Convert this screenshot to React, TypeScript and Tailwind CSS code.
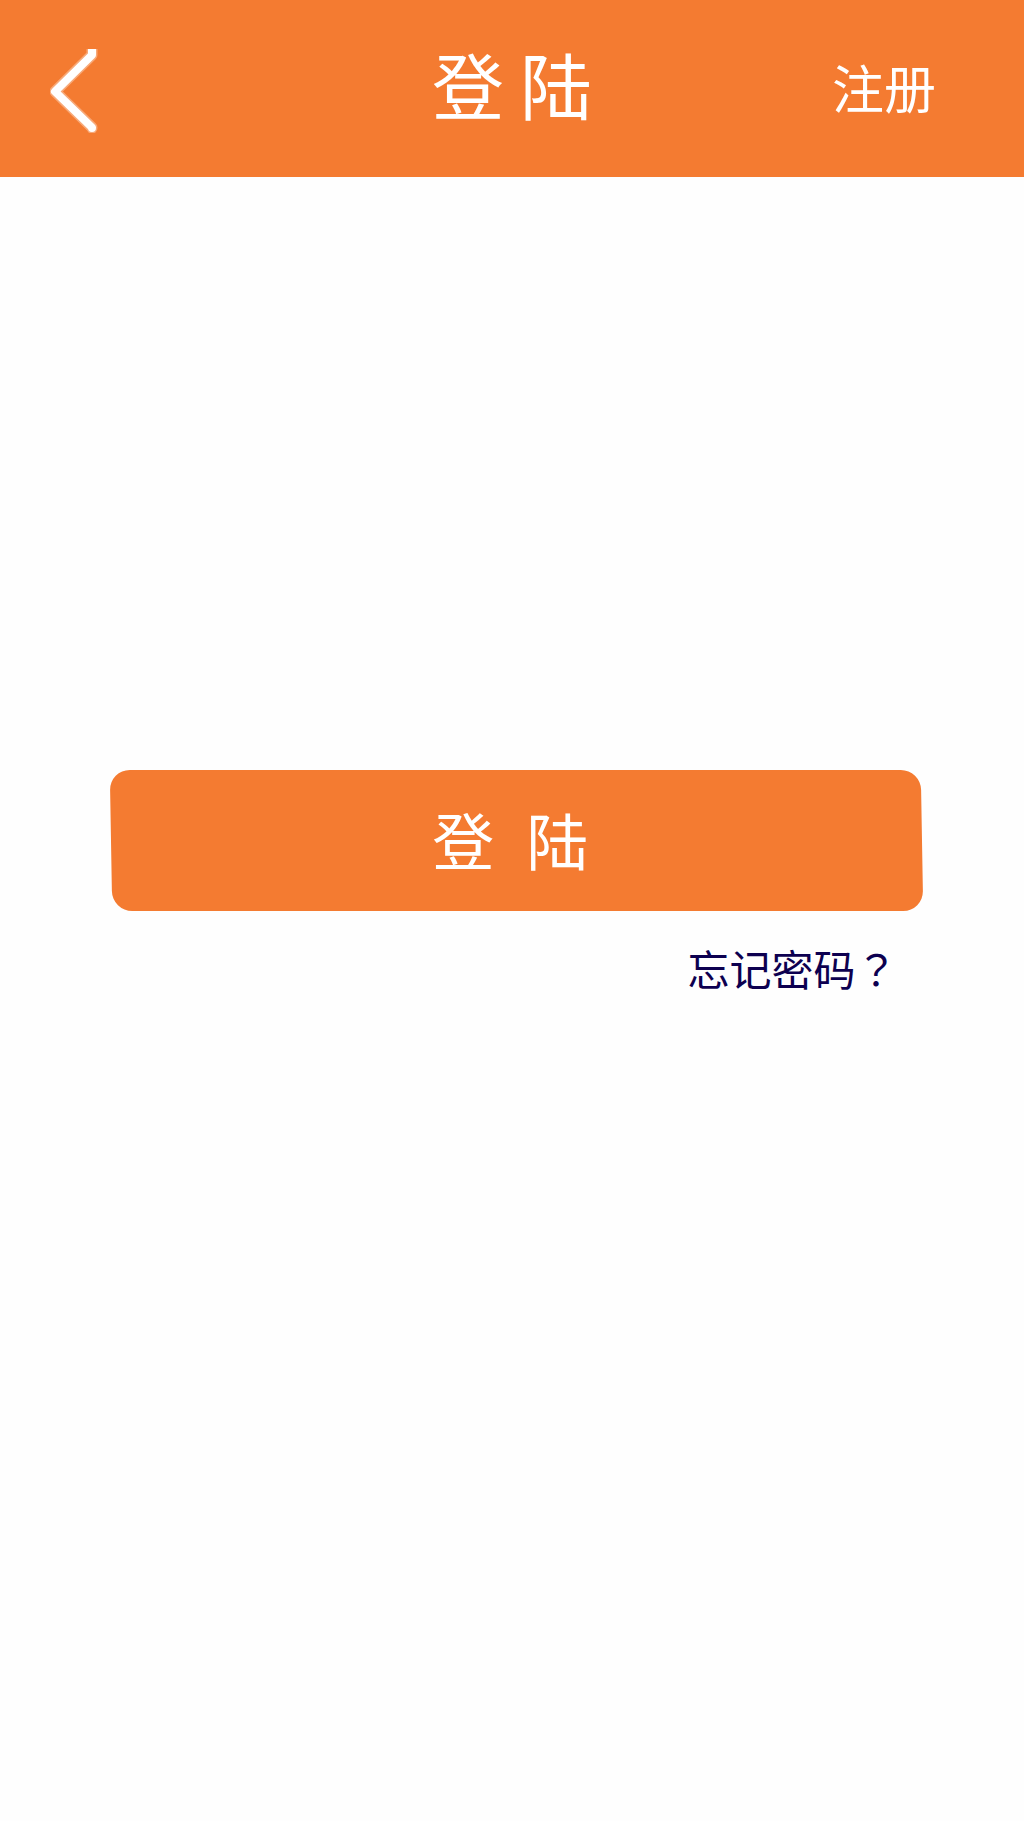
function BackIcon() {
  return (
    <svg viewBox="0 0 48 84" className="h-[84px] w-12" fill="none" aria-hidden="true">
      <path
        d="M42 -3 L42 6 L5 42.5 L42 78.5 L42 79"
        stroke="#fff"
        strokeOpacity="0.35"
        strokeWidth="11"
        strokeLinejoin="round"
        strokeLinecap="round"
      />
      <path
        d="M42 -3 L42 6 L5 42.5 L42 78.5 L42 79"
        stroke="#fff"
        strokeWidth="8"
        strokeLinejoin="round"
        strokeLinecap="round"
      />
    </svg>
  );
}

export default function App() {
  return (
    <div
      lang="zh-CN"
      className="min-h-screen bg-[#fefefe] font-['Noto_Sans_CJK_SC',sans-serif]"
    >
      <header className="grid h-[177px] grid-cols-[1fr_auto_1fr] items-center bg-[#f47b31] text-white">
        <button type="button" aria-label="返回" className="mt-1 ml-[50px] justify-self-start">
          <BackIcon />
        </button>
        <h1 className="pb-3 text-[72px] leading-none">登 陆</h1>
        <a href="#register" className="mr-[88px] justify-self-end pb-1 text-[52px] leading-none">
          注册
        </a>
      </header>

      <main className="pt-[593px] pr-[10%] pl-[111px]">
        <form className="flex flex-col" onSubmit={(event) => event.preventDefault()}>
          <button
            type="submit"
            className="relative isolate flex h-[141px] items-center justify-center gap-8 pr-3 pb-1 text-[62px] leading-none text-white before:absolute before:inset-0 before:-z-10 before:skew-x-1 before:rounded-[20px] before:bg-[#f47b31]"
          >
            <span>登</span>
            <span>陆</span>
          </button>
          <a
            href="#forgot-password"
            className="mt-9 mr-6 self-end text-[42px] leading-none text-[#0d0050]"
          >
            忘记密码
            <span lang="zh-TW" className="font-['Noto_Sans_CJK_TC',sans-serif]">
              ？
            </span>
          </a>
        </form>
      </main>
    </div>
  );
}
